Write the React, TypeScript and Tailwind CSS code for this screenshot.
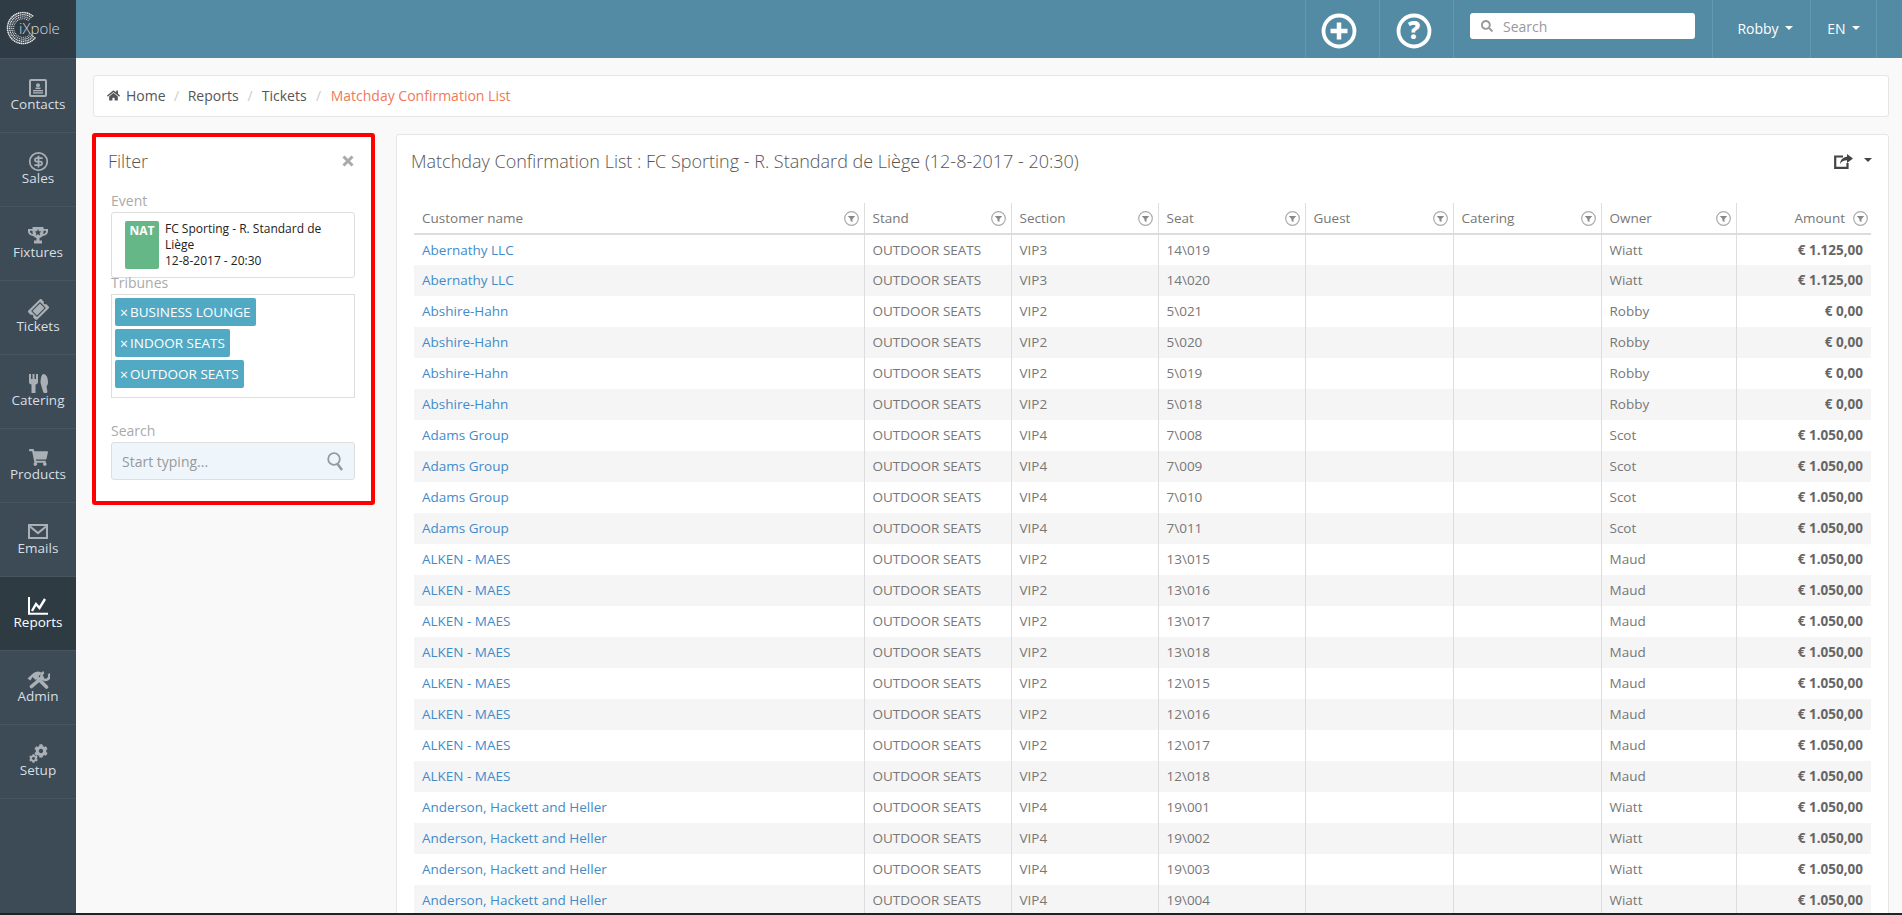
import React from 'react';
import { CircleDollarSign } from 'lucide-react';
import { FaHome, FaSearch, FaShoppingCart, FaTicketAlt, FaCog } from 'react-icons/fa';

type Row = { customer: string; section: string; seat: string; owner: string; amount: string };

const make = (customer: string, section: string, seats: string[], owner: string, amount: string): Row[] =>
  seats.map((seat) => ({ customer, section, seat, owner, amount }));

const rows: Row[] = [
  ...make('Abernathy LLC', 'VIP3', ['14\\019', '14\\020'], 'Wiatt', '€ 1.125,00'),
  ...make('Abshire-Hahn', 'VIP2', ['5\\021', '5\\020', '5\\019', '5\\018'], 'Robby', '€ 0,00'),
  ...make('Adams Group', 'VIP4', ['7\\008', '7\\009', '7\\010', '7\\011'], 'Scot', '€ 1.050,00'),
  ...make('ALKEN - MAES', 'VIP2', ['13\\015', '13\\016', '13\\017', '13\\018', '12\\015', '12\\016', '12\\017', '12\\018'], 'Maud', '€ 1.050,00'),
  ...make('Anderson, Hackett and Heller', 'VIP4', ['19\\001', '19\\002', '19\\003', '19\\004'], 'Wiatt', '€ 1.050,00'),
];

const Logo = () => {
  const dots: React.ReactNode[] = [];
  [15.5, 13.3, 11.2, 9.3].forEach((r, ring) => {
    const count = [40, 34, 28, 24][ring];
    for (let i = 0; i < count; i++) {
      const a = 40 + (i * 275) / count;
      const rad = (a * Math.PI) / 180;
      dots.push(
        <circle key={`${ring}-${i}`} cx={23 + r * Math.cos(rad)} cy={28 + r * Math.sin(rad)} r={0.85 - ring * 0.1} fill="#e6e8ea" />
      );
    }
  });
  return (
    <svg width="76" height="59" viewBox="0 0 76 59">
      {dots}
      <text x="19" y="34" fill="#d5d9db" fontSize="15" fontWeight="300" fontFamily="'Open Sans', sans-serif">iXpole</text>
    </svg>
  );
};

const ContactsIcon = () => (
  <svg width="18" height="18" viewBox="0 0 18 18">
    <rect x="1" y="1" width="16" height="16" rx="1" fill="none" stroke="currentColor" strokeWidth="2" />
    <circle cx="9" cy="6.2" r="2" fill="currentColor" />
    <rect x="6.5" y="8.5" width="5" height="1.6" fill="currentColor" />
    <rect x="4" y="11" width="10" height="1.4" fill="currentColor" />
    <rect x="4" y="13.2" width="10" height="1.4" fill="currentColor" />
  </svg>
);

const TrophyIcon = () => (
  <svg width="20" height="17" viewBox="0 0 20 17">
    <path d="M4.500 0h11v2H20v2.500c0 2.500-2.200 4.300-5.200 4.600C14 10 12.800 10.600 11.500 11v2.500H14V16.500H6v-3h2.500V11C7.200 10.600 6 10 5.200 9.100 2.200 8.800 0 7 0 4.500V2h4.500V0zM2 3.700v.8c0 1.200 1 2.200 2.900 2.600C4.600 6 4.500 4.900 4.500 3.700H2zm16 0h-2.500c0 1.200-.1 2.300-.4 3.400 1.900-.4 2.900-1.400 2.900-2.600v-.8z" fill="currentColor" />
    <path d="M10 2l1 2.300 2.400.2-1.800 1.600.6 2.400L10 7.200 7.800 8.500l.6-2.400-1.800-1.600 2.400-.2z" fill="#3c4b55" />
  </svg>
);

const TicketIcon = () => <FaTicketAlt size={19} className="-rotate-45" />;

const CateringIcon = () => (
  <svg width="19" height="19" viewBox="0 0 19 19">
    <path d="M0 0h2v5h1.500V0h2v5H7V0h2v8c0 1.500-1 2.500-2.500 2.500V19h-4V10.500C1 10.500 0 9.500 0 8V0z" fill="currentColor" />
    <path d="M14.500 0c2.800 0 4.500 3.800 4.500 8 0 2-.5 3.500-1.500 4.300l.9 5.200c.1.900-.4 1.500-1.200 1.500h-1.800c-.6 0-1-.4-1.200-1L11.500 9c0-4.500 1-9 3-9z" fill="currentColor" />
  </svg>
);

const EnvelopeIcon = () => (
  <svg width="20" height="15" viewBox="0 0 20 15">
    <rect x="1" y="1" width="18" height="13" fill="none" stroke="currentColor" strokeWidth="2" />
    <path d="M2 2.500 10 9l8-6.500" fill="none" stroke="currentColor" strokeWidth="2.200" />
  </svg>
);

const ReportsIcon = () => (
  <svg width="20" height="18" viewBox="0 0 20 18">
    <path d="M1 0v16.800h19" fill="none" stroke="currentColor" strokeWidth="2" />
    <path d="M4 14l4-7 3.500 4L17 2" fill="none" stroke="currentColor" strokeWidth="2.400" />
  </svg>
);

const AdminIcon = () => (
  <svg width="23" height="18" viewBox="0 0 23 18">
    <path d="M19.500 16 9 5.500" stroke="currentColor" strokeWidth="3.600" strokeLinecap="round" />
    <path d="M0.500 7.500 6.500 2Q10 -.5 13.500 1L14.500 2 8.500 9 5.500 6 3.500 9.500z" fill="currentColor" />
    <path d="M4.500 15.500 15 6.500" stroke="currentColor" strokeWidth="3.600" strokeLinecap="round" />
    <path d="M21.800 2.800A4 4 0 1 1 16.800 1.300" fill="none" stroke="currentColor" strokeWidth="2.600" />
  </svg>
);

const SetupIcon = () => (
  <span className="relative block w-[19px] h-[19px]">
    <FaCog size={14} className="absolute right-0 top-0" />
    <FaCog size={9} className="absolute left-0 bottom-0" />
  </span>
);

const navItems: { label: string; icon: React.ReactNode; active?: boolean }[] = [
  { label: 'Contacts', icon: <ContactsIcon /> },
  { label: 'Sales', icon: <CircleDollarSign size={21} strokeWidth={2} /> },
  { label: 'Fixtures', icon: <TrophyIcon /> },
  { label: 'Tickets', icon: <TicketIcon /> },
  { label: 'Catering', icon: <CateringIcon /> },
  { label: 'Products', icon: <FaShoppingCart size={19} /> },
  { label: 'Emails', icon: <EnvelopeIcon /> },
  { label: 'Reports', icon: <ReportsIcon />, active: true },
  { label: 'Admin', icon: <AdminIcon /> },
  { label: 'Setup', icon: <SetupIcon /> },
];

const Sidebar = () => (
  <aside className="w-[76px] flex-shrink-0 bg-[#3c4b55]">
    <div className="h-[59px] bg-[#2f3c45] border-b border-[#46555f]">
      <Logo />
    </div>
    {navItems.map((item) => (
      <div
        key={item.label}
        className={`h-[74px] flex flex-col items-center pt-[18px] border-b border-[#46555f] ${item.active ? 'bg-[#2e3b43] text-white' : 'text-[#aab0b5]'}`}
      >
        <div className="h-[19px] flex items-center justify-center translate-y-[1px]">{item.icon}</div>
        <span className={`text-[13.5px] leading-4 ${item.active ? 'text-white' : 'text-[#d8dfe3]'}`}>{item.label}</span>
      </div>
    ))}
  </aside>
);

const Caret = ({ className }: { className: string }) => (
  <span className={`inline-block w-0 h-0 border-x-[4.5px] border-x-transparent border-t-[4.5px] ${className}`} />
);

const TopBar = () => (
  <header className="h-[58px] flex-shrink-0 bg-[#538ba5] flex justify-end pr-[25px] text-white">
    <div className="w-[74px] flex items-center justify-center pt-[4px] pr-[7px] border-l border-[#6298b0]">
      <svg width="36" height="36" viewBox="0 0 36 36">
        <circle cx="18" cy="18" r="15.500" fill="none" stroke="white" strokeWidth="3.800" />
        <path d="M18 9.500v17M9.500 18h17" stroke="white" strokeWidth="4.500" />
      </svg>
    </div>
    <div className="w-[74px] flex items-center justify-center pt-[4px] pr-[5px] border-l border-[#6298b0]">
      <svg width="36" height="36" viewBox="0 0 36 36">
        <circle cx="18" cy="18" r="15.500" fill="none" stroke="white" strokeWidth="3.800" />
        <text x="18" y="26" textAnchor="middle" fill="white" fontSize="24" fontWeight="800" fontFamily="'Open Sans', sans-serif">?</text>
      </svg>
    </div>
    <div className="w-[259px] border-l border-[#6298b0] pl-[16px] pt-[13px]">
      <div className="w-[225px] h-[26px] bg-white rounded-[3px] flex items-center pl-[11px] gap-[10px]">
        <FaSearch size={12} className="text-[#999]" />
        <span className="text-[14px] text-[#999]">Search</span>
      </div>
    </div>
    <div className="w-[98px] flex items-center justify-center gap-[6px] pl-[7px] pb-[2px] border-l border-[#6298b0] text-[14px]">
      Robby <Caret className="border-t-white" />
    </div>
    <div className="w-[67px] flex items-center justify-center gap-[6px] pb-[2px] border-x border-[#6298b0] text-[14px]">
      EN <Caret className="border-t-white" />
    </div>
  </header>
);

const Breadcrumb = () => (
  <nav className="h-[42px] bg-white border border-[#e6e6e6] rounded-[3px] flex items-center pl-[13px] pb-[1px] text-[14px] text-[#555]">
    <FaHome size={13} className="mr-[6px]" />
    <span>Home</span>
    <span className="px-[8.5px] text-[#ccc]">/</span>
    <span>Reports</span>
    <span className="px-[9px] text-[#ccc]">/</span>
    <span>Tickets</span>
    <span className="px-[9.5px] text-[#ccc]">/</span>
    <span className="text-[#ee7a5a]">Matchday Confirmation List</span>
  </nav>
);

const Tag = ({ label }: { label: string }) => (
  <div className="h-[28px] w-fit bg-[#52a9c4] rounded-[2px] flex items-center pl-[5px] pr-[5px] text-white text-[13.5px]">
    <span className="mr-[2px] text-[14px]">×</span>
    {label}
  </div>
);

const FilterPanel = () => (
  <section className="w-[283px] h-[372px] -ml-[1px] -mt-[1px] flex-shrink-0 bg-white border-[4px] border-[#ff0000] rounded-[3px] pl-[15px] pr-[16px] pt-[1px]">
    <div className="h-[46px] flex items-center justify-between -ml-[3px] pr-[1px]">
      <span className="text-[18px] font-light text-[#555]">Filter</span>
      <svg width="12" height="12" viewBox="0 0 12 12">
        <path d="M1.500 1.500l9 9M10.500 1.500l-9 9" stroke="#aaa" strokeWidth="3" />
      </svg>
    </div>
    <div className="mt-[7px] mb-[1px] text-[14px] leading-5 text-[#aaa]">Event</div>
    <div className="h-[66px] border border-[#ddd] rounded-[3px] flex pl-[13px] pt-[8px]">
      <div className="w-[34px] h-[48px] bg-[#66b788] rounded-[2px] text-white text-[12px] font-bold text-center leading-[20px]">NAT</div>
      <div className="ml-[6px] w-[170px] text-[12px] leading-4 text-[#222] font-medium">
        FC Sporting - R. Standard de Liège
        <br />
        12-8-2017 - 20:30
      </div>
    </div>
    <div className="-mt-[5px] mb-[1px] text-[14px] leading-5 text-[#aaa]">Tribunes</div>
    <div className="h-[104px] border border-[#ddd] pl-[3px] pt-[3px] flex flex-col gap-[3px]">
      <Tag label="BUSINESS LOUNGE" />
      <Tag label="INDOOR SEATS" />
      <Tag label="OUTDOOR SEATS" />
    </div>
    <div className="mt-[23px] mb-[1px] text-[14px] leading-5 text-[#aaa]">Search</div>
    <div className="h-[38px] bg-[#eef6fc] border border-[#ddd] rounded-[3px] flex items-center justify-between pl-[10px] pr-[10px]">
      <span className="text-[14px] text-[#999]">Start typing...</span>
      <svg width="17" height="19" viewBox="0 0 17 19">
        <circle cx="7" cy="7" r="5.800" fill="none" stroke="#999" strokeWidth="1.800" />
        <path d="M10.500 12l4.500 6" stroke="#999" strokeWidth="2.500" />
      </svg>
    </div>
  </section>
);

const FilterIcon = () => (
  <svg width="15" height="15" viewBox="0 0 15 15" className="flex-shrink-0">
    <circle cx="7.500" cy="7.500" r="6.800" fill="white" stroke="#aaa" strokeWidth="1.200" />
    <path d="M3.800 5h7.400L8.500 8v3l-2-1V8z" fill="#888" />
  </svg>
);

const ShareIcon = () => (
  <svg width="19" height="15" viewBox="0 0 19 15">
    <path d="M9 2.500H1.200v11.300h12.300V9" fill="none" stroke="currentColor" strokeWidth="2.200" />
    <path d="M13 0l6 4.500L13 9V6.300C9.500 6.300 7.500 7.500 6 10 6.300 6 8.800 3.200 13 2.800V0z" fill="currentColor" />
  </svg>
);

const columns = [
  { label: 'Customer name', width: 'w-[450px]' },
  { label: 'Stand', width: 'w-[147px]' },
  { label: 'Section', width: 'w-[147px]' },
  { label: 'Seat', width: 'w-[147px]' },
  { label: 'Guest', width: 'w-[148px]' },
  { label: 'Catering', width: 'w-[148px]' },
  { label: 'Owner', width: 'w-[135px]' },
];

const ReportTable = () => (
  <table className="w-[1457px] table-fixed border-collapse text-[13.5px] text-[#777]">
    <thead>
      <tr className="h-[31px]">
        {columns.map((col, i) => (
          <th key={col.label} className={`${col.width} p-0 font-normal text-left border-b-2 border-[#ddd] ${i > 0 ? 'border-l border-l-[#ddd]' : ''}`}>
            <div className="flex items-center justify-between pl-[8px] pr-[5px]">
              {col.label}
              <FilterIcon />
            </div>
          </th>
        ))}
        <th className="w-[135px] p-0 font-normal border-b-2 border-l border-[#ddd]">
          <div className="flex items-center justify-end gap-[8px] pr-[3px]">
            Amount
            <FilterIcon />
          </div>
        </th>
      </tr>
    </thead>
    <tbody>
      {rows.map((row, i) => (
        <tr key={i} className={`h-[31px] ${i % 2 === 1 ? 'bg-[#f5f5f5]' : 'bg-white'}`}>
          <td className="px-[8px] py-0 text-[#428bca]">{row.customer}</td>
          <td className="px-[8px] py-0 border-l border-[#ddd]">OUTDOOR SEATS</td>
          <td className="px-[8px] py-0 border-l border-[#ddd]">{row.section}</td>
          <td className="px-[8px] py-0 border-l border-[#ddd]">{row.seat}</td>
          <td className="border-l border-[#ddd]" />
          <td className="border-l border-[#ddd]" />
          <td className="px-[8px] py-0 border-l border-[#ddd]">{row.owner}</td>
          <td className="px-[8px] py-0 border-l border-[#ddd] text-right font-bold text-[#666]">{row.amount}</td>
        </tr>
      ))}
    </tbody>
  </table>
);

const MainPanel = () => (
  <section className="flex-1 min-w-0 bg-white border border-[#e6e6e6] rounded-[3px] pl-[14px]">
    <div className="h-[68px] flex items-center justify-between pb-[16px] pr-[16px]">
      <h2 className="text-[18px] font-light text-[#555]">Matchday Confirmation List : FC Sporting - R. Standard de Liège (12-8-2017 - 20:30)</h2>
      <div className="flex items-center gap-[11px] -ml-[3px] text-[#444]">
        <ShareIcon />
        <Caret className="border-t-[#444] -mt-[3px]" />
      </div>
    </div>
    <div className="pl-[3px]">
      <ReportTable />
    </div>
  </section>
);

export default function App() {
  return (
    <div className="h-screen flex flex-col overflow-hidden font-['Open_Sans',sans-serif] bg-[#f9f9f9]">
      <div className="flex-1 min-h-0 flex">
        <Sidebar />
        <main className="flex-1 min-w-0 flex flex-col">
          <TopBar />
          <div className="flex-1 min-h-0 overflow-hidden pl-[17px] pr-[13px] pt-[17px]">
            <Breadcrumb />
            <div className="flex items-start gap-[21px] mt-[17px]">
              <FilterPanel />
              <MainPanel />
            </div>
          </div>
        </main>
      </div>
      <div className="h-[2px] bg-[#222]" />
    </div>
  );
}
